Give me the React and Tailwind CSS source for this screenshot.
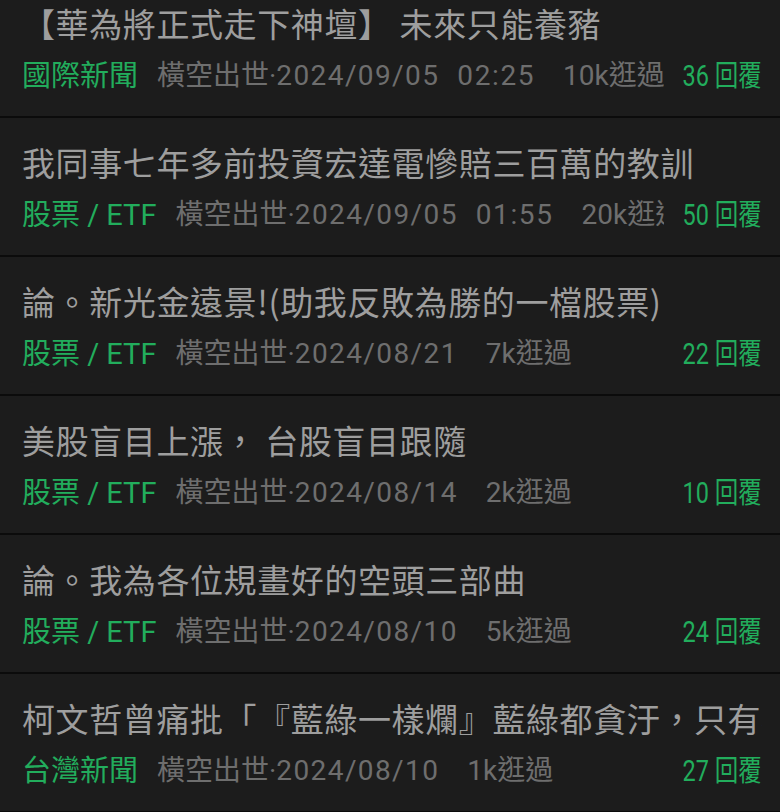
import React from "react";

const rows = [
  { title: "【華為將正式走下神壇】 未來只能養豬", cat: "國際新聞", date: "2024/09/05", time: "02:25", views: "10k逛過", replies: "36" },
  { title: "我同事七年多前投資宏達電慘賠三百萬的教訓", cat: "股票 / ETF", date: "2024/09/05", time: "01:55", views: "20k逛過", replies: "50" },
  { title: "論。新光金遠景!(助我反敗為勝的一檔股票)", cat: "股票 / ETF", date: "2024/08/21", views: "7k逛過", replies: "22" },
  { title: "美股盲目上漲， 台股盲目跟隨", cat: "股票 / ETF", date: "2024/08/14", views: "2k逛過", replies: "10" },
  { title: "論。我為各位規畫好的空頭三部曲", cat: "股票 / ETF", date: "2024/08/10", views: "5k逛過", replies: "24" },
  { title: "柯文哲曾痛批「『藍綠一樣爛』藍綠都貪汙，只有柯文哲才是乾淨的", cat: "台灣新聞", date: "2024/08/10", views: "1k逛過", replies: "27" },
];

export default function App() {
  return (
    <div className="min-h-screen w-[780px] overflow-hidden bg-[#1c1c1c]">
      <div className="-mt-[21px]">
        {rows.map((r, i) => (
          <div key={i} className="border-b-2 border-[#0b0b0b] pl-[22px] pr-[18px] pt-[22px] pb-[20px]">
            <div
              className="h-[44px] overflow-hidden whitespace-nowrap text-[33px] leading-[44px] tracking-[0.6px] text-[#9e9e9e] [text-spacing-trim:space-all]"
              style={{ fontFamily: '"Noto Sans CJK TC", "Noto Sans", sans-serif' }}
            >
              {r.title}
            </div>
            <div
              className="mt-[11px] flex h-[40px] items-center text-[28px] leading-[40px]"
              style={{ fontFamily: 'Roboto, "Noto Sans CJK TC", sans-serif' }}
            >
              <span className="shrink-0 text-[29px] text-[#22ad5c]">{r.cat}</span>
              <div className="ml-[19px] flex min-w-0 flex-1 overflow-hidden whitespace-nowrap text-[#6e6e6e]">
                <span className="shrink-0">
                  橫空出世·<span className="tracking-[1.4px]">{r.date}</span>
                </span>
                {r.time && <span className="ml-[18px] shrink-0 tracking-[1.6px]">{r.time}</span>}
                <span className="ml-[28px] shrink-0">{r.views}</span>
              </div>
              <span className="shrink-0 origin-right scale-x-[0.81] text-[29px] text-[#22ad5c]">
                {r.replies} 回覆
              </span>
            </div>
          </div>
        ))}
      </div>
    </div>
  );
}
